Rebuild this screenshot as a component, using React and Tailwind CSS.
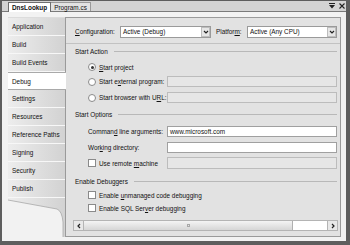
import React from "react";

const tabs = [
  "Application",
  "Build",
  "Build Events",
  "Debug",
  "Settings",
  "Resources",
  "Reference Paths",
  "Signing",
  "Security",
  "Publish",
];

const U = ({ children }) => <span className="underline underline-offset-[1px]">{children}</span>;

// text nudged down a pixel so lowercase sits centred like the Tahoma original
const T = ({ children, className = "" }) => <span className={`pt-[2px] whitespace-nowrap ${className}`}>{children}</span>;

const Chevron = ({ dir = "down" }) => {
  const d = dir === "down" ? "M1 2 L3 4 L5 2" : dir === "left" ? "M4 1 L2 3 L4 5" : "M2 1 L4 3 L2 5";
  return (
    <svg width="6" height="6" viewBox="0 0 6 6">
      <path d={d} fill="none" stroke="#222" strokeWidth="1.2" />
    </svg>
  );
};

const Select = ({ value, className }) => (
  <div className={`h-[12px] bg-white border border-[#9a9a9a] flex items-center ${className}`}>
    <T className="flex-1 pl-[2px]">{value}</T>
    <span className="w-[9px] h-[10px] bg-[#e6e6e6] border border-[#bdbdbd] flex items-center justify-center">
      <Chevron />
    </span>
  </div>
);

const Radio = ({ checked }) => (
  <span className="w-[8px] h-[8px] rounded-full border border-[#8a8a8a] bg-white flex items-center justify-center shrink-0">
    {checked && <span className="w-[3px] h-[3px] rounded-full bg-[#333]" />}
  </span>
);

const Check = () => <span className="w-[8px] h-[8px] border border-[#8a8a8a] bg-white shrink-0" />;

const Heading = ({ label, className }) => (
  <div className={`flex items-center h-[12px] pl-[9px] pr-[3px] ${className}`}>
    <T>{label}</T>
    <div className="flex-1 ml-[6px] border-t border-[#b8b8b8]" />
  </div>
);

const Row = ({ label, box, className }) => (
  <div className={`flex items-center pl-[22px] pr-[3px] ${className}`}>
    <div className="w-[79px] flex items-center gap-[3px] whitespace-nowrap">{label}</div>
    {box}
  </div>
);

const DisabledBox = ({ className }) => (
  <div className={`flex-1 border border-[#bcbcbc] bg-[#e6e6e6] ${className}`} />
);

const App = () => {
  return (
    <div className="w-[350px] h-[245px] flex flex-col border-l-2 border-r-4 border-b-4 border-t border-[#5e5e5e] bg-[#f2f2f2] text-[6.4px] leading-none text-[#111] font-['Liberation_Sans',Arial,sans-serif] overflow-hidden">
      {/* document tabs */}
      <div className="h-[11px] flex items-end bg-[#d4d4d4] border-b border-[#7a7a7a] shrink-0">
        <div className="ml-[6px] h-[10px] -mb-px px-[3px] flex items-center bg-white border border-b-0 border-[#6e6e6e] font-bold">
          <T>DnsLookup</T>
        </div>
        <div className="h-[9px] px-[3px] flex items-center bg-[#e2e2e2] border-r border-t border-[#9a9a9a]">
          <T>Program.cs</T>
        </div>
        <div className="ml-auto self-center flex items-center gap-[4px] mr-[1px]">
          <svg width="6" height="6" viewBox="0 0 6 6">
            <path d="M0 0.5 H6" stroke="#222" strokeWidth="1" />
            <path d="M0 2 H6 L3 5.5 Z" fill="#222" />
          </svg>
          <svg width="6" height="6" viewBox="0 0 6 6">
            <path d="M0.5 0.5 L5.5 5.5 M5.5 0.5 L0.5 5.5" stroke="#222" strokeWidth="1.1" />
          </svg>
        </div>
      </div>

      {/* body */}
      <div className="flex-1 flex pt-[5px] pl-[6px] pr-[5px] pb-[4px]">
        {/* side tabs */}
        <div className="w-[57px] flex flex-col pt-px bg-[#dcdcdc]">
          {tabs.map((t) =>
            t === "Debug" ? (
              <div
                key={t}
                className="relative z-10 -mr-px h-[18px] flex items-center pl-[4px] bg-white border-y border-[#a9a9a9]"
              >
                <T>{t}</T>
              </div>
            ) : (
              <div
                key={t}
                className="h-[18px] flex items-center pl-[4px] bg-linear-to-r from-[#ededed] to-[#d2d2d2] border-b border-[#f7f7f7]"
              >
                <T>{t}</T>
              </div>
            )
          )}
          <div className="flex-1 bg-[#f2f2f2]">
            <svg width="57" height="39" viewBox="0 0 57 39">
              <defs>
                <linearGradient id="g" x1="0" x2="1" y1="0" y2="0">
                  <stop offset="0" stopColor="#ededed" />
                  <stop offset="1" stopColor="#d2d2d2" />
                </linearGradient>
              </defs>
              <path d="M0 0 H57 V39 H55 V24 Q54 13 49 11 L0 2 Z" fill="url(#g)" />
              <path d="M0 2 L49 11 Q54 13 55 24 V39" fill="none" stroke="#a8a8a8" strokeWidth="0.8" />
            </svg>
          </div>
        </div>

        {/* property panel */}
        <div className="flex-1 flex flex-col border border-[#9a9a9a] bg-[#e2e2e2]">
          <div className="h-[26px] flex items-center pl-[9px] pr-[3px] pt-[2px] border-b border-[#c2c2c2]">
            <T className="w-[45px]">
              <U>C</U>onfiguration:
            </T>
            <Select value="Active (Debug)" className="w-[91px]" />
            <T className="ml-[5px] w-[31px]">
              Platfor<U>m</U>:
            </T>
            <Select value="Active (Any CPU)" className="w-[90px]" />
          </div>

          <Heading label="Start Action" className="mt-px" />
          <Row
            className="h-[14px] mt-[3px]"
            label={
              <>
                <Radio checked />
                <T>
                  <U>S</U>tart project
                </T>
              </>
            }
            box={null}
          />
          <Row
            className="h-[13px] mt-px"
            label={
              <>
                <Radio />
                <T>
                  Start e<U>x</U>ternal program:
                </T>
              </>
            }
            box={<DisabledBox className="h-[11px]" />}
          />
          <Row
            className="h-[13px] mt-[3px]"
            label={
              <>
                <Radio />
                <T>
                  Start browser with U<U>R</U>L:
                </T>
              </>
            }
            box={<DisabledBox className="h-[11px]" />}
          />

          <Heading label="Start Options" className="mt-[4px]" />
          <Row
            className="h-[12px] mt-[5px]"
            label={
              <T>
                Comman<U>d</U> line arguments:
              </T>
            }
            box={
              <div className="flex-1 h-[11px] bg-white border border-[#a0a0a0] flex items-center pl-[2px]">
                <T>www.microsoft.com</T>
              </div>
            }
          />
          <Row
            className="h-[12px] mt-[4px]"
            label={
              <T>
                Wor<U>k</U>ing directory:
              </T>
            }
            box={<div className="flex-1 h-[11px] bg-white border border-[#a0a0a0]" />}
          />
          <Row
            className="h-[12px] mt-[4px]"
            label={
              <>
                <Check />
                <T>
                  Use remote <U>m</U>achine
                </T>
              </>
            }
            box={<DisabledBox className="h-[12px]" />}
          />

          <Heading label="Enable Debuggers" className="mt-[6px]" />
          <Row
            className="h-[12px] mt-[2px]"
            label={
              <>
                <Check />
                <T>
                  Enable <U>u</U>nmanaged code debugging
                </T>
              </>
            }
            box={null}
          />
          <Row
            className="h-[12px] mt-px"
            label={
              <>
                <Check />
                <T>
                  Enable SQL Ser<U>v</U>er debugging
                </T>
              </>
            }
            box={null}
          />

          {/* horizontal scrollbar */}
          <div className="mt-[6px] ml-[7px] mr-[2px] h-[11px] flex bg-white border border-[#b4b4b4]">
            <div className="w-[10px] bg-[#e8e8e8] border-r border-[#b4b4b4] flex items-center justify-center">
              <Chevron dir="left" />
            </div>
            <div className="w-[209px] bg-linear-to-b from-[#f4f4f4] to-[#d6d6d6] border-r border-[#b0b0b0] flex items-center justify-center">
              <span className="w-[3px] h-[3px] border border-[#a8a8a8]" />
            </div>
            <div className="flex-1 bg-white" />
            <div className="w-[10px] bg-[#e8e8e8] border-l border-[#b4b4b4] flex items-center justify-center">
              <Chevron dir="right" />
            </div>
          </div>
        </div>
      </div>
    </div>
  );
};

export default App;
